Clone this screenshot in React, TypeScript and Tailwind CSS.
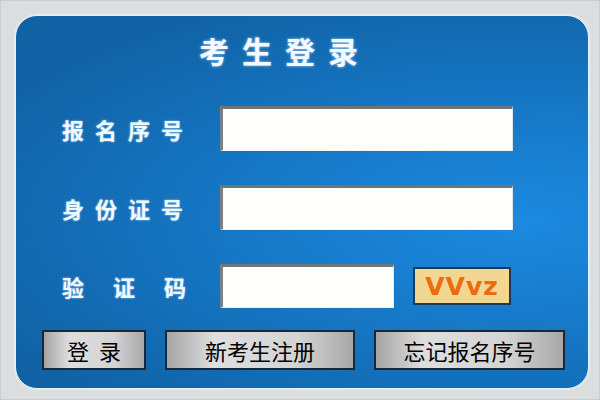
export default function App() {
  const rows = [
    { label: "报名序号", wide: true },
    { label: "身份证号", wide: true },
  ];

  return (
    <div className="h-[400px] w-[600px] overflow-hidden border border-[#c8cccc] bg-[#dadede] pl-[14px] pt-[14px] font-['Noto_Sans_CJK_SC',sans-serif]">
      <div className="flex h-[374px] w-[574px] flex-col rounded-[22px] border border-[#e8f2fa] bg-[radial-gradient(ellipse_at_88%_55%,#1c8ae0_0%,#1575c2_45%,#1062a4_85%)] shadow-[0_0_3px_rgba(255,255,255,0.8)]">
        <h1 className="mt-[16px] pl-[183px] text-[30px] font-bold leading-[36px] tracking-[13px] text-[#f4faff] [text-shadow:0_0_3px_rgba(180,220,255,0.9)]">
          考生登录
        </h1>

        <div className="mt-[38px] flex flex-col gap-[34px] pl-[46px]">
          {rows.map((row) => (
            <div key={row.label} className="flex h-[45px] items-center">
              <span className="w-[158px] text-[22px] font-bold leading-none tracking-[11px] text-[#eef8ff] [text-shadow:0_0_2px_rgba(200,230,255,0.9)]">
                {row.label}
              </span>
              <div className="h-[45px] w-[293px] border-t-[3px] border-l-[3px] border-r border-b border-t-[#6e7478] border-l-[#7a8084] border-r-[#dfe8ee] border-b-[#eef4f8] bg-[#fffffb]" />
            </div>
          ))}

          <div className="flex h-[44px] items-center">
            <span className="flex w-[158px] justify-between pr-[34px] text-[22px] font-bold leading-none text-[#eef8ff] [text-shadow:0_0_2px_rgba(200,230,255,0.9)]">
              <span>验</span>
              <span>证</span>
              <span>码</span>
            </span>
            <div className="h-[44px] w-[174px] border-t-[3px] border-l-[3px] border-r border-b border-t-[#6e7478] border-l-[#7a8084] border-r-[#dfe8ee] border-b-[#eef4f8] bg-[#fffffb]" />
            <div className="ml-[19px] flex h-[38px] w-[98px] items-center justify-center border-2 border-[#1b3a58] bg-[#f2d692] font-['DejaVu_Sans',sans-serif] text-[25px] font-semibold leading-none tracking-[1px] text-[#ee6a10]">
              VVvz
            </div>
          </div>
        </div>

        <div className="mt-[22px] flex gap-[19px] pl-[26px]">
          <button className="flex h-[40px] w-[104px] items-center justify-center border-2 border-[#1a2836] bg-[linear-gradient(to_right,#a4a4a4,#dedede_25%,#d4d4d4_70%,#a8a8a8)] pl-[10px] text-[22px] leading-none tracking-[10px] text-black">
            登录
          </button>
          <button className="flex h-[40px] w-[190px] items-center justify-center border-2 border-[#1a2836] bg-[linear-gradient(to_right,#a4a4a4,#dedede_25%,#d4d4d4_70%,#a8a8a8)] text-[22px] leading-none text-black">
            新考生注册
          </button>
          <button className="flex h-[40px] w-[191px] items-center justify-center border-2 border-[#1a2836] bg-[linear-gradient(to_right,#a4a4a4,#dedede_25%,#d4d4d4_70%,#a8a8a8)] text-[22px] leading-none text-black">
            忘记报名序号
          </button>
        </div>
      </div>
    </div>
  );
}
